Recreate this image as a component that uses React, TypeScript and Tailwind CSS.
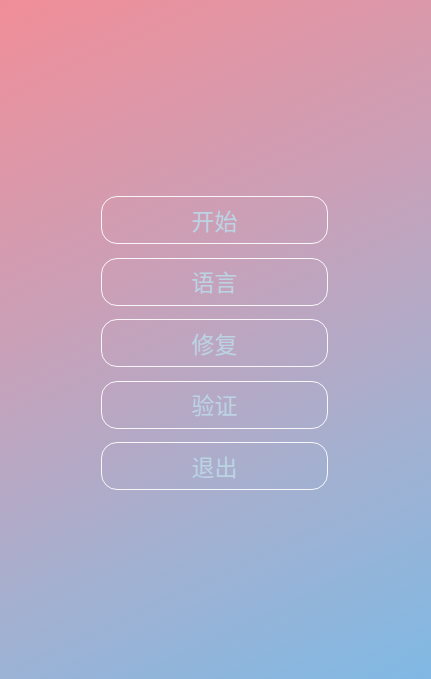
import React from "react"

const items = ["开始", "语言", "修复", "验证", "退出"]

export default function App() {
  return (
    <div className="h-[679px] w-full overflow-hidden bg-[linear-gradient(155deg,#f18e98_0%,#c9a0b8_40%,#a4b0d0_70%,#80b9e4_100%)] font-['Noto_Sans_CJK_SC',sans-serif]">
      <div className="flex flex-col items-center gap-[13.5px] pr-[2px] pt-[196px]">
        {items.map((label) => (
          <button
            key={label}
            className="flex h-[48px] w-[227px] items-center justify-center rounded-[16px] border border-white/90 bg-transparent text-[23px] leading-none text-[#bcd3e3]"
          >
            {label}
          </button>
        ))}
      </div>
    </div>
  )
}
